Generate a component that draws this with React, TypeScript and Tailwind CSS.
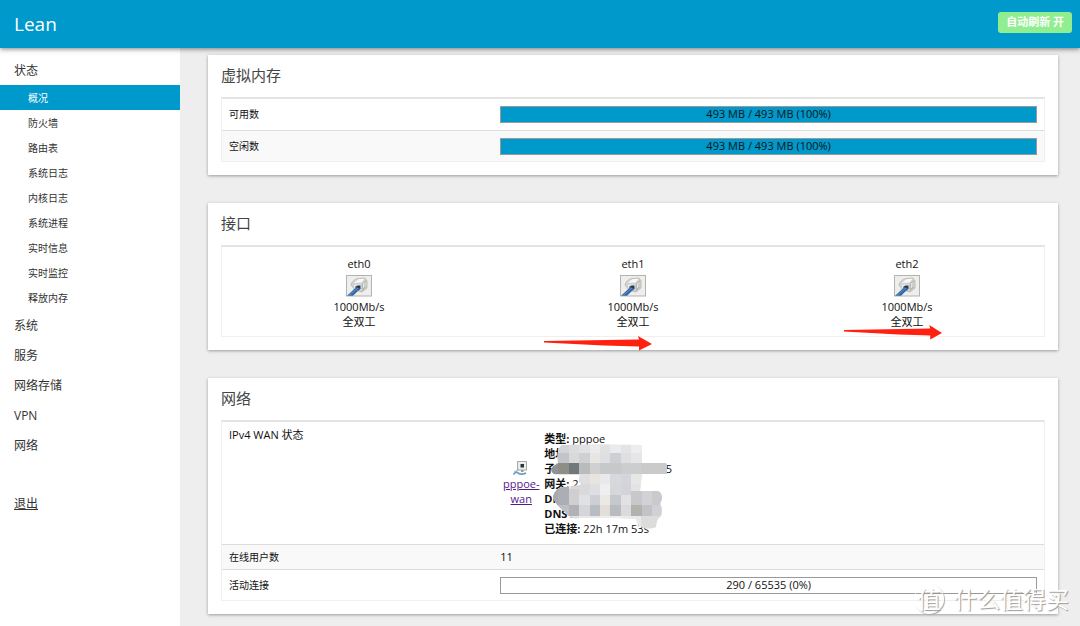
import React from 'react';

const menu = ['系统', '服务', '网络存储', 'VPN', '网络'];

const statusPages = [
  '概况',
  '防火墙',
  '路由表',
  '系统日志',
  '内核日志',
  '系统进程',
  '实时信息',
  '实时监控',
  '释放内存',
];

const ports = [
  { name: 'eth0', speed: '1000Mb/s', duplex: '全双工' },
  { name: 'eth1', speed: '1000Mb/s', duplex: '全双工' },
  { name: 'eth2', speed: '1000Mb/s', duplex: '全双工' },
];

const memory = [
  { label: '可用数', text: '493 MB / 493 MB (100%)', percent: 100 },
  { label: '空闲数', text: '493 MB / 493 MB (100%)', percent: 100 },
];

const wan = [
  { label: '类型', value: 'pppoe' },
  { label: '地址', value: '' },
  { label: '子网掩码', value: '255.255.255.25' },
  { label: '网关', value: '22' },
  { label: 'DNS 1', value: '' },
  { label: 'DNS 2', value: '' },
  { label: '已连接', value: '22h 17m 53s' },
];

// x, y, width, height, color
const mosaic: [number, number, number, number, string][] = [
  [14, 6, 11, 10, '#d3d3d8'], [25, 6, 10, 10, '#dcdcde'], [35, 6, 11, 10, '#e2e2e4'],
  [46, 6, 10, 10, '#ececee'], [56, 6, 10, 10, '#e0e1e3'], [66, 6, 11, 10, '#ebebed'],
  [77, 6, 10, 10, '#e3e3e6'], [87, 6, 12, 10, '#ededed'],
  [0, 16, 14, 11, '#d2d2d4'], [14, 16, 11, 11, '#c3c3cb'], [25, 16, 10, 11, '#d8d9db'],
  [35, 16, 11, 11, '#cfd0d4'], [46, 16, 10, 11, '#e9e6e1'], [56, 16, 10, 11, '#dedfe2'],
  [66, 16, 11, 11, '#cdcfd2'], [77, 16, 10, 11, '#dfdfe3'], [87, 16, 12, 11, '#e6e6e8'],
  [0, 26, 14, 11, '#929296'], [14, 26, 11, 11, '#8e8e87'], [25, 26, 10, 11, '#70787c'],
  [35, 26, 11, 11, '#b9bbbc'], [46, 26, 10, 11, '#d0d0d0'], [56, 26, 21, 11, '#c7c8ca'],
  [77, 26, 20, 11, '#cccdcf'], [97, 26, 27, 11, '#cacaca'],
  [27, 37, 19, 10, '#dfdfe1'], [46, 37, 10, 10, '#e8e5e0'], [56, 37, 10, 10, '#e9e9eb'],
  [66, 37, 11, 10, '#d6d8dc'], [77, 37, 10, 10, '#d4d4dc'], [87, 37, 12, 10, '#e7e7e7'],
  [27, 47, 19, 11, '#d9d9db'], [46, 47, 10, 11, '#dedfe3'], [56, 47, 10, 11, '#efefef'],
  [66, 47, 11, 11, '#d7d7d9'], [77, 47, 10, 11, '#d2d3db'], [87, 47, 12, 7, '#e3e3e5'],
  [0, 50, 14, 18, '#a9a9ac'], [14, 50, 11, 18, '#acaeb6'], [25, 52, 10, 16, '#cfcfd1'],
  [35, 58, 11, 10, '#e0e1e3'], [46, 58, 10, 10, '#cdcfd4'], [56, 58, 10, 10, '#ebe9e4'],
  [66, 58, 11, 10, '#c5c9cd'], [77, 58, 10, 10, '#e2e2e4'], [87, 54, 11, 14, '#c8c8ca'],
  [98, 54, 10, 14, '#d2d2d6'], [108, 54, 12, 14, '#cacaca'],
  [0, 68, 25, 11, '#bfbfc3'], [25, 68, 10, 11, '#b0b2b8'],
  [35, 68, 11, 11, '#d6d6d8'], [46, 68, 10, 11, '#b9bcc2'], [56, 68, 10, 11, '#e3ded8'],
  [66, 68, 11, 11, '#b8bcc1'], [77, 68, 10, 11, '#dadbdd'], [87, 68, 11, 11, '#b4b2ae'],
  [98, 68, 10, 11, '#c1c3c7'], [108, 68, 12, 11, '#d0d0d6'],
  [14, 79, 21, 10, '#e0e0e2'], [35, 79, 21, 10, '#e8e8e8'], [56, 79, 21, 10, '#eeeeee'],
  [77, 79, 20, 14, '#e9e9eb'], [97, 79, 25, 14, '#dcdcdc'],
];

const Mosaic: React.FC = () => (
  <svg className="absolute left-0 top-1.5" width="124" height="92" viewBox="0 0 124 92" aria-hidden="true">
    <defs>
      <clipPath id="mosaic-shape">
        <path d="M18 8Q50 7 98 8V26H121Q123 26 123 29V37H98L96 54H114Q118 55 118 62L116 67Q119 71 117 79Q112 82 112 90Q102 94 94 88L92 82Q60 80 36 81Q26 83 22 76Q9 66 9 59Q12 50 20 50L37 48Q34 43 36 38H12Q7 36 7 32Q9 28 14 27Q12 12 18 8Z" />
      </clipPath>
    </defs>
    <g clipPath="url(#mosaic-shape)" shapeRendering="crispEdges">
      <rect width="124" height="92" fill="#e4e4e6" />
      {mosaic.map(([x, y, w, h, fill], index) => (
        <rect key={index} x={x} y={y} width={w} height={h} fill={fill} />
      ))}
    </g>
  </svg>
);

const PortIcon = () => (
  <svg className="mx-auto block" width="26" height="22" viewBox="0 0 26 22" aria-hidden="true">
    <rect x="0.5" y="0.5" width="25" height="20.5" fill="#eeeeec" stroke="#b2b4b0" />
    <path d="M5 10Q6 5 12 3.5L19 3L21 6V13L16 17L9 15Z" fill="#d5d7d2" stroke="#b0b2ad" strokeWidth="0.8" />
    <path d="M8 8L12.5 4L18.5 3.8L15.5 7.5Z" fill="#f8f8f6" />
    <path d="M16 8L20 5V12.5L16 16Z" fill="#b5b7b3" />
    <path d="M17.5 8V13M19 7V12" stroke="#f2f2f0" strokeWidth="0.8" />
    <path d="M7 9H15.5V15.5H8Z" fill="#e8e9e6" stroke="#bfc1bc" strokeWidth="0.6" />
    <path d="M9 12L11.5 10.5H14.5V14L12 15.5Z" fill="#22364f" />
    <path d="M1 20.8L10.5 12L14.5 13.5L7 20.8Z" fill="#3465a4" />
    <path d="M3 20.5L12 13" stroke="#6c95cf" strokeWidth="0.9" />
  </svg>
);

const TunnelIcon = () => (
  <svg className="mx-auto block" width="16" height="15" viewBox="0 0 16 15" aria-hidden="true">
    <rect x="4.5" y="0.5" width="9" height="8.5" fill="#eceee8" stroke="#a9aca5" />
    <rect x="7.5" y="3" width="3.5" height="3.5" fill="#2e3436" />
    <path d="M8 9H10.5V11H8Z" fill="#9b9e98" />
    <path d="M0.5 13.5C3 10 4 11 5 12C7 13.5 10 13.5 13 12" fill="none" stroke="#6f9cc4" strokeWidth="1.7" />
    <path d="M1 11L6 8.5" stroke="#8fb3d6" />
  </svg>
);

const Progress = ({ text, percent }: { text: string; percent: number }) => (
  <div
    role="progressbar"
    aria-valuenow={percent}
    className="relative h-[17px] border border-[#999] bg-white text-center leading-[14px]"
  >
    <div className="absolute inset-y-0 left-0 bg-[#0099cc]" style={{ width: `${percent}%` }}></div>
    <span className="relative">{text}</span>
  </div>
);

const Card = ({ title, children }: { title: string; children: React.ReactNode }) => (
  <section className="bg-white px-[13px] pb-[13px] shadow-[0_1px_3px_rgba(0,0,0,0.35)]">
    <h3 className="h-[42px] text-[15px] leading-10 text-[#444]">{title}</h3>
    <div className="border border-t-2 border-[#efefef] border-t-[#e4e4e4]">{children}</div>
  </section>
);

const Arrow = ({ className }: { className: string }) => (
  <svg className={`absolute h-4 ${className}`} viewBox="0 0 108 16" preserveAspectRatio="none" aria-hidden="true">
    <path d="M0 6L95 4.5L94 1L108 9L95 15.5V11.5L60 10.5L0 7.5Z" fill="#ff2010" />
  </svg>
);

const App: React.FC = () => {
  return (
    <div className="relative flex min-h-screen flex-col bg-[#eeeeee] font-['Open_Sans','Noto_Sans_CJK_SC',sans-serif] text-[11px] text-[#111]">
      {/* Header */}
      <header className="relative z-10 flex h-12 items-center justify-between bg-[#0099cc] pl-[14px] pr-2 shadow-[0_1px_5px_rgba(0,0,0,0.5)]">
        <a href="#" className="text-[19px] font-medium text-white">Lean</a>
        <button type="button" className="mb-1 h-[21px] rounded-[3px] bg-[#90ee90] px-2 text-[11px] font-bold leading-5 text-white">
          自动刷新 开
        </button>
      </header>

      <div className="flex grow">
        {/* Sidebar */}
        <nav className="w-[180px] shrink-0 bg-white pt-[7px] text-[12px] text-[#333]">
          <a href="#" className="block h-[30px] pl-[14px] leading-8">状态</a>
          <ul className="text-[10px]">
            {statusPages.map((page, index) => (
              <li key={page}>
                <a
                  href="#"
                  className={`block h-[25px] pl-7 leading-[27px] ${index === 0 ? 'bg-[#0099cc] text-white' : ''}`}
                >
                  {page}
                </a>
              </li>
            ))}
          </ul>
          {menu.map((item) => (
            <a key={item} href="#" className="block h-[30px] pl-[14px] leading-8">{item}</a>
          ))}
          <a href="#" className="mt-7 block h-[30px] pl-[14px] leading-8 underline">退出</a>
        </nav>

        {/* Content */}
        <main className="flex grow flex-col gap-7 pb-3 pl-7 pr-[22px] pt-[7px]">
          <Card title="虚拟内存">
            <table className="w-full table-fixed border-separate border-spacing-0">
              <tbody>
                {memory.map((row, index) => (
                  <tr key={row.label} className={index > 0 ? 'bg-[#f9f9f9]' : ''}>
                    <td className={`h-[31px] w-[33%] px-[7px] text-[10px] ${index > 0 ? 'border-t border-[#ddd]' : ''}`}>{row.label}</td>
                    <td className={`px-[7px] ${index > 0 ? 'border-t border-[#ddd]' : ''}`}>
                      <Progress text={row.text} percent={row.percent} />
                    </td>
                  </tr>
                ))}
              </tbody>
            </table>
          </Card>

          <div className="relative">
            <Card title="接口">
              <div className="grid h-[89px] grid-cols-3 pt-[9px] text-center leading-[15px]">
                {ports.map((port) => (
                  <div key={port.name}>
                    <p className="pb-1">{port.name}</p>
                    <PortIcon />
                    <p className="pt-0.5">{port.speed}</p>
                    <p>{port.duplex}</p>
                  </div>
                ))}
              </div>
            </Card>
            <Arrow className="right-[406px] top-[132px] w-[108px]" />
            <Arrow className="right-[116px] top-[121px] w-[98px]" />
          </div>

          <Card title="网络">
            <table className="w-full table-fixed border-separate border-spacing-0">
              <tbody>
                <tr>
                  <td className="h-[122px] w-[33%] px-[7px] pt-[5px] align-top">IPv4 WAN 状态</td>
                  <td className="px-[7px]">
                    <div className="flex items-center leading-[15px]">
                      <div className="mr-0.5 w-[42px] shrink-0 text-center">
                        <TunnelIcon />
                        <a href="#" className="text-[#551a8b] underline">pppoe-<br />wan</a>
                      </div>
                      <div className="relative">
                        {wan.map((item) => (
                          <p key={item.label}>
                            <strong>{item.label}:</strong> {item.value}
                          </p>
                        ))}
                        <Mosaic />
                      </div>
                    </div>
                  </td>
                </tr>
                <tr className="bg-[#f9f9f9]">
                  <td className="h-[25px] border-t border-[#ddd] px-[7px] text-[10px]">在线用户数</td>
                  <td className="border-t border-[#ddd] px-[7px]">11</td>
                </tr>
                <tr>
                  <td className="h-[31px] border-t border-[#ddd] px-[7px] text-[10px]">活动连接</td>
                  <td className="border-t border-[#ddd] px-[7px]">
                    <Progress text="290 / 65535 (0%)" percent={0} />
                  </td>
                </tr>
              </tbody>
            </table>
          </Card>
        </main>
      </div>

      {/* Watermark */}
      <div className="absolute bottom-[11px] right-[11px] z-10 flex items-center gap-2.5 text-white [text-shadow:1px_1px_1px_#999]">
        <span className="flex size-[30px] items-center justify-center rounded-full border border-white text-[23px] leading-none shadow-[1px_1px_1px_#aaa]">值</span>
        <span className="text-[23px] leading-8">什么值得买</span>
      </div>
    </div>
  );
};

export default App;
